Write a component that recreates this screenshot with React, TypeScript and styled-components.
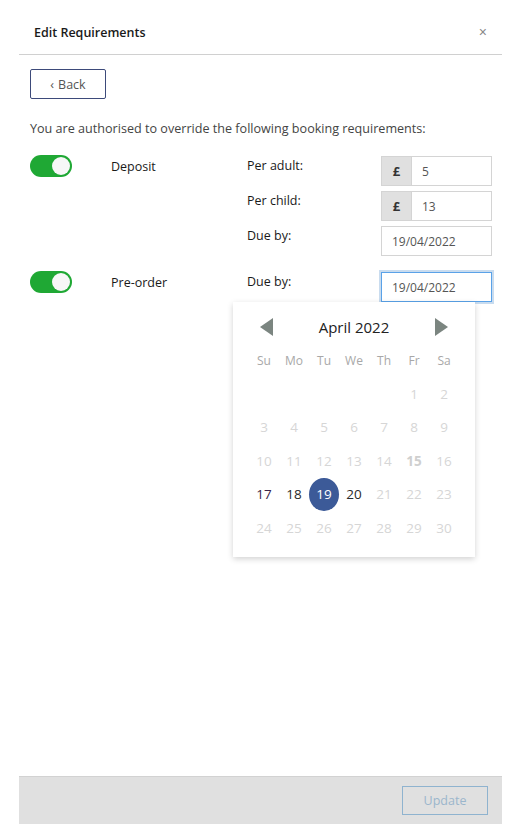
import React, { useState } from 'react';
import styled, { createGlobalStyle } from 'styled-components';

const GlobalStyle = createGlobalStyle`
  body {
    margin: 0;
    background: #fff;
    font-family: 'Open Sans', 'Liberation Sans', sans-serif;
    color: #222;
  }
`;

const Page = styled.div`
  padding-left: 19px;
  width: 483px;
`;

const Modal = styled.div`
  display: flex;
  flex-direction: column;
  height: 824px;
  background: #fff;
`;

const Header = styled.div`
  height: 55px;
  box-sizing: border-box;
  display: flex;
  align-items: center;
  justify-content: space-between;
  padding: 10px 15px 0;
  border-bottom: 1px solid #d0d0d0;
`;

const Title = styled.h4`
  margin: 0;
  font-size: 12.5px;
  font-weight: 600;
  color: #1a1a1a;
`;

const Close = styled.button`
  border: none;
  background: none;
  padding: 0;
  font-size: 14px;
  color: #888;
  cursor: pointer;
  line-height: 1;
`;

const Body = styled.div`
  flex: 1;
  padding: 14px 10px 0 11px;
`;

const BackButton = styled.button`
  width: 76px;
  height: 30px;
  border: 1px solid #3d4a7a;
  border-radius: 2px;
  background: #fff;
  color: #555;
  font-family: inherit;
  font-size: 12.5px;
  display: flex;
  align-items: center;
  justify-content: center;
  gap: 4px;
  cursor: pointer;
`;

const Intro = styled.p`
  margin: 21px 0 19px;
  font-size: 12.6px;
  color: #444;
`;

const Requirement = styled.div<{ $gap?: number }>`
  display: grid;
  grid-template-columns: 81px 136px 134px 111px;
  row-gap: 5px;
  margin-bottom: ${({ $gap }) => $gap ?? 0}px;
`;

const ToggleTrack = styled.button<{ $on: boolean }>`
  grid-column: 1;
  grid-row: 1;
  width: 42px;
  height: 22px;
  padding: 0;
  border: none;
  border-radius: 11px;
  background: ${({ $on }) => ($on ? '#1fa834' : '#ccc')};
  position: relative;
  cursor: pointer;
  margin-top: -1px;
`;

const ToggleKnob = styled.span<{ $on: boolean }>`
  position: absolute;
  top: 2px;
  left: ${({ $on }) => ($on ? '22px' : '2px')};
  width: 18px;
  height: 18px;
  border-radius: 50%;
  background: #f7f7f7;
`;

const Name = styled.div`
  grid-column: 2;
  grid-row: 1;
  font-size: 12.5px;
  font-weight: 500;
  color: #1a1a1a;
  padding-top: 2px;
`;

const FieldLabel = styled.div<{ $row: number }>`
  grid-column: 3;
  grid-row: ${({ $row }) => $row};
  font-size: 12.5px;
  font-weight: 500;
  color: #1a1a1a;
  padding-top: 1px;
`;

const FieldCell = styled.div<{ $row: number }>`
  grid-column: 4;
  grid-row: ${({ $row }) => $row};
  position: relative;
`;

const InputGroup = styled.div`
  display: flex;
  height: 30px;
  border: 1px solid #d4d4d4;
  box-sizing: border-box;
`;

const Addon = styled.span`
  width: 29px;
  background: #e0e0e0;
  border-right: 1px solid #d4d4d4;
  display: flex;
  align-items: center;
  justify-content: center;
  font-size: 13px;
  font-weight: 700;
  color: #333;
`;

const TextInput = styled.input`
  flex: 1;
  min-width: 0;
  border: none;
  outline: none;
  padding: 0 10px;
  font-family: inherit;
  font-size: 12px;
  color: #555;
`;

const DateInput = styled.input<{ $focus?: boolean }>`
  width: 100%;
  height: 30px;
  box-sizing: border-box;
  border: 1px solid ${({ $focus }) => ($focus ? '#5aa2e8' : '#d4d4d4')};
  box-shadow: ${({ $focus }) => ($focus ? '0 0 0 2px #c9dcef' : 'none')};
  outline: none;
  padding: 0 10px;
  font-family: inherit;
  font-size: 12px;
  color: #555;
`;

const Popup = styled.div`
  position: absolute;
  top: 30px;
  left: -148px;
  width: 242px;
  height: 255px;
  box-sizing: border-box;
  background: #fff;
  box-shadow: 0 2px 6px rgba(0, 0, 0, 0.18);
  padding: 12px 16px 0;
  z-index: 2;
`;

const CalHead = styled.div`
  display: flex;
  align-items: center;
  justify-content: space-between;
  height: 26px;
  padding: 0 11px 0 11px;
`;

const Month = styled.span`
  font-size: 15px;
  color: #222;
`;

const Arrow = styled.span<{ $dir: 'left' | 'right' }>`
  width: 0;
  height: 0;
  border-top: 9px solid transparent;
  border-bottom: 9px solid transparent;
  ${({ $dir }) =>
    $dir === 'left' ? 'border-right: 13px solid #7b8580;' : 'border-left: 13px solid #7b8580;'}
  cursor: pointer;
`;

const DayGrid = styled.div`
  display: grid;
  grid-template-columns: repeat(7, 30px);
  grid-auto-rows: 33.4px;
  margin-top: 4px;
`;

const WeekDay = styled.span`
  display: flex;
  align-items: center;
  justify-content: center;
  font-size: 12px;
  color: #a8a8a8;
`;

const Day = styled.span<{ $tone: 'off' | 'on' | 'sel' | 'today' | 'sun' }>`
  display: flex;
  align-items: center;
  justify-content: center;
  font-size: 13.5px;
  color: ${({ $tone }) =>
    $tone === 'on'
      ? '#2a2a2a'
      : $tone === 'sun'
      ? '#3a2448'
      : $tone === 'sel'
      ? '#fff'
      : $tone === 'today'
      ? '#cfcfcf'
      : '#d6d6d6'};
  font-weight: ${({ $tone }) => ($tone === 'today' ? 700 : 400)};
  background: ${({ $tone }) => ($tone === 'sel' ? '#3c5a98' : 'transparent')};
  border-radius: 50%;
`;

const Footer = styled.div`
  height: 47px;
  background: #e0e0e0;
  border-top: 1px solid #d2d2d2;
  display: flex;
  align-items: center;
  justify-content: flex-end;
  padding-right: 14px;
`;

const UpdateButton = styled.button`
  width: 86px;
  height: 29px;
  border: 1px solid #8fb3cf;
  background: transparent;
  color: #9bb6cc;
  font-family: inherit;
  font-size: 12.5px;
  cursor: default;
`;

const weekDays = ['Su', 'Mo', 'Tu', 'We', 'Th', 'Fr', 'Sa'];

const toneFor = (d: number) => {
  if (d === 19) return 'sel';
  if (d === 17) return 'sun';
  if (d === 18 || d === 20) return 'on';
  if (d === 15) return 'today';
  return 'off';
};

const Toggle: React.FC<{ on: boolean; onClick: () => void }> = ({ on, onClick }) => (
  <ToggleTrack $on={on} onClick={onClick}>
    <ToggleKnob $on={on} />
  </ToggleTrack>
);

const Calendar: React.FC = () => {
  const days: (number | null)[] = [null, null, null, null, null];
  for (let d = 1; d <= 30; d++) days.push(d);
  return (
    <Popup>
      <CalHead>
        <Arrow $dir="left" />
        <Month>April 2022</Month>
        <Arrow $dir="right" />
      </CalHead>
      <DayGrid>
        {weekDays.map((w) => (
          <WeekDay key={w}>{w}</WeekDay>
        ))}
        {days.map((d, i) =>
          d === null ? (
            <span key={'e' + i} />
          ) : (
            <Day key={d} $tone={toneFor(d)}>
              {d}
            </Day>
          )
        )}
      </DayGrid>
    </Popup>
  );
};

const App: React.FC = () => {
  const [deposit, setDeposit] = useState(true);
  const [preorder, setPreorder] = useState(true);

  return (
    <Page>
      <GlobalStyle />
      <Modal>
        <Header>
          <Title>Edit Requirements</Title>
          <Close>×</Close>
        </Header>
        <Body>
          <BackButton>
            <span>‹</span>Back
          </BackButton>
          <Intro>You are authorised to override the following booking requirements:</Intro>

          <Requirement $gap={16}>
            <Toggle on={deposit} onClick={() => setDeposit(!deposit)} />
            <Name>Deposit</Name>
            <FieldLabel $row={1}>Per adult:</FieldLabel>
            <FieldCell $row={1}>
              <InputGroup>
                <Addon>£</Addon>
                <TextInput defaultValue="5" />
              </InputGroup>
            </FieldCell>
            <FieldLabel $row={2}>Per child:</FieldLabel>
            <FieldCell $row={2}>
              <InputGroup>
                <Addon>£</Addon>
                <TextInput defaultValue="13" />
              </InputGroup>
            </FieldCell>
            <FieldLabel $row={3}>Due by:</FieldLabel>
            <FieldCell $row={3}>
              <DateInput defaultValue="19/04/2022" />
            </FieldCell>
          </Requirement>

          <Requirement>
            <Toggle on={preorder} onClick={() => setPreorder(!preorder)} />
            <Name>Pre-order</Name>
            <FieldLabel $row={1}>Due by:</FieldLabel>
            <FieldCell $row={1}>
              <DateInput $focus defaultValue="19/04/2022" />
              <Calendar />
            </FieldCell>
          </Requirement>
        </Body>
        <Footer>
          <UpdateButton>Update</UpdateButton>
        </Footer>
      </Modal>
    </Page>
  );
};

export default App;
